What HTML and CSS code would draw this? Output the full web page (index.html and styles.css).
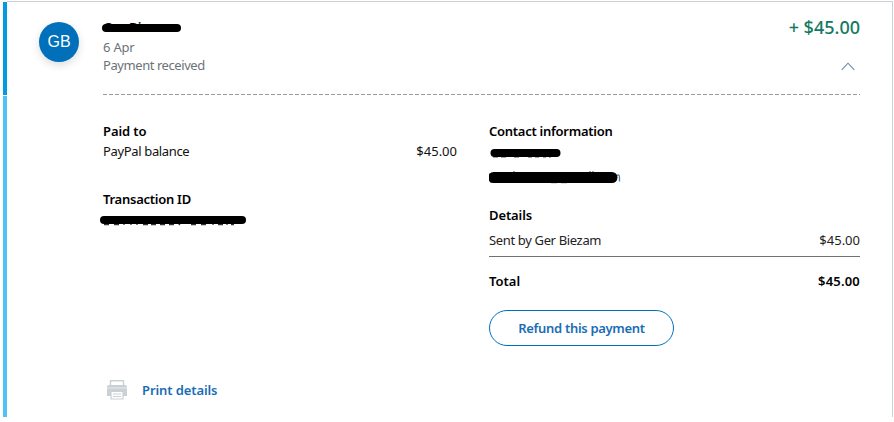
FILE: index.html
```html
<!DOCTYPE html>
<html lang="en">
<head>
<meta charset="utf-8">
<title>Payment details</title>
<link rel="stylesheet" href="styles.css">
</head>
<body>
<article class="card">
  <div class="rail"><span class="rail-top"></span><span class="rail-rest"></span></div>
  <div class="panel">
    <div class="avatar">GB</div>
    <div class="content">
      <header class="summary">
        <div class="who">
          <div class="payer"><span class="payer-name">Ger Biezam</span><svg class="redact" width="82" height="18" viewBox="0 0 82 18"><path d="M4 10H75" stroke="#000" stroke-width="8" stroke-linecap="round"/></svg></div>
          <div class="muted date">6 Apr</div>
          <div class="muted status">Payment received</div>
        </div>
        <div class="sum">
          <div class="amount"><span class="plus">+</span> $45.00</div>
          <svg class="chevron" width="14" height="9" viewBox="0 0 14 9"><path d="M.7 7.8 7 1.2l6.3 6.6" fill="none" stroke="#6c86b8" stroke-width="1.1"/></svg>
        </div>
      </header>
      <svg class="dashes" width="757" height="1"><path d="M0 .5H757" stroke="#9a9da0" stroke-dasharray="4 2"/></svg>
      <div class="columns">
        <section class="left">
          <h2>Paid to</h2>
          <div class="row balance"><span class="label">PayPal balance</span><span class="money">$45.00</span></div>
          <h2 class="tight">Transaction ID</h2>
          <svg class="redact-id" width="148" height="18" viewBox="0 0 148 18"><path d="M4 13.500H9M14 13.500H19M24 12V14M31 12V14M37 12V14M43 13.500H48M51 13.500H56M60 13.500H65M69 13.500H74M78 12L80 14M91 13.500H96M101 13.500H106M113 12V14M118 13.500H123M127 12V14M131 13.500H134" stroke="#333" stroke-width="1.3"/><path d="M4 9H142" stroke="#000" stroke-width="8" stroke-linecap="round"/></svg>
        </section>
        <section class="right">
          <h2 class="tight">Contact information</h2>
          <svg class="redact-contact" width="140" height="46" viewBox="0 0 140 46"><path d="M4 17H9M12 17H17M25 17H30M39 17H43M46 17H50M54 17H57M61 16V18" stroke="#444" stroke-width="1"/><path d="M5.500 13H67.500" stroke="#000" stroke-width="8" stroke-linecap="round"/><path d="M2 40V43M18 40V43M25 31V33M62 42.500H68M72 42.500H78M101 31V33M104 31V33M126.500 41V36.500Q130.500 33 130.500 37.500V41.500" fill="none" stroke="#4b7fb0" stroke-width="1.3"/><path d="M4.500 37.500H123" stroke="#000" stroke-width="11" stroke-linecap="round"/></svg>
          <h2 class="details">Details</h2>
          <div class="row sent"><span class="label">Sent by Ger Biezam</span><span class="money">$45.00</span></div>
          <div class="row total"><span>Total</span><span class="money">$45.00</span></div>
          <button class="refund" type="button">Refund this payment</button>
        </section>
      </div>
      <a class="print"><svg width="20" height="20" viewBox="0 0 20 20"><path d="M3.500 6V.8h13V6" fill="#fff" stroke="#c9d1d5" stroke-width="1.4"/><path d="M2 5h16q2 0 2 2V16H0V7q0-2 2-2Z" fill="#c9d1d5"/><path d="M0 8H20" stroke="#e6eaed"/><path d="M4 11.500h12v7.500H4ZM6 14h8M6 16.500h8" fill="#fff" stroke="#c9d1d5" stroke-width="1.2"/></svg><span>Print details</span></a>
    </div>
  </div>
</article>
</body>
</html>
```

FILE: styles.css
```css
* { box-sizing: border-box; }
body { margin: 0; background: #fff; font: 13px/18px "Noto Sans", sans-serif; color: #222; }
h2 { margin: 0; font-size: 13px; line-height: 18px; font-weight: 600; color: #000; white-space: nowrap; letter-spacing: -.1px; }
.tight { letter-spacing: -.26px; }
.label { letter-spacing: -.35px; }
svg { display: block; flex: none; }
.card { display: flex; width: 890px; height: 416px; margin: 1px 0 0 3px; }
.rail { display: flex; flex-direction: column; gap: 1px; width: 4px; padding-top: 1px; }
.rail-top { height: 93px; background: #009cde; }
.rail-rest { flex: 1; background: #4fc3f7; }
.panel { display: flex; flex: 1; padding-left: 32px; border-top: 1px solid #cbd2d6; border-right: 1px solid #cbd2d6; }
.avatar { width: 40px; height: 40px; margin-top: 20px; border-radius: 50%; background: #0070ba; color: #fff; font: 16px/39px "Liberation Sans", sans-serif; text-align: center; box-shadow: 0 3px 8px rgba(0,0,0,.14); }
.content { width: 757px; margin-left: 24px; }
.summary { display: flex; justify-content: space-between; height: 92px; padding-top: 16px; }
.payer { position: relative; height: 20px; line-height: 19px; color: #000; font-weight: 600; }
.redact { position: absolute; left: -1px; top: 0; }
.muted { color: #6c7378; }
.date { line-height: 19px; letter-spacing: -.2px; }
.status { margin-top: -1px; line-height: 18px; letter-spacing: -.43px; }
.sum { display: flex; flex-direction: column; align-items: flex-end; }
.amount { color: #14795f; font-size: 18px; font-weight: 500; line-height: 19px; white-space: nowrap; }
.chevron { margin: 25px 5px 0 0; }
.columns { display: grid; grid-template-columns: 354px 371px; gap: 32px; padding-top: 27px; height: 252px; }
.row { display: flex; justify-content: space-between; }
.balance { margin: 2px 0 30px; color: #111; }
.redact-id { margin: 3px 0 0 -3px; }
.details { margin-top: 20px; }
.sent { height: 26px; margin-top: 7px; border-bottom: 1px solid #6c7378; }
.total { margin-top: 15px; color: #000; font-weight: 600; }
.total .money { letter-spacing: .2px; }
.refund { display: block; width: 185px; height: 36px; margin-top: 20px; padding: 0; border: 1px solid #0070ba; border-radius: 18px; background: #fff; color: #1a6db5; font: 600 13px/34px "Noto Sans", sans-serif; letter-spacing: -.32px; }
.print { display: flex; align-items: center; gap: 15px; height: 22px; margin: 32px 0 0 4px; color: #1a6db5; font-weight: 600; letter-spacing: -.1px; }
```
